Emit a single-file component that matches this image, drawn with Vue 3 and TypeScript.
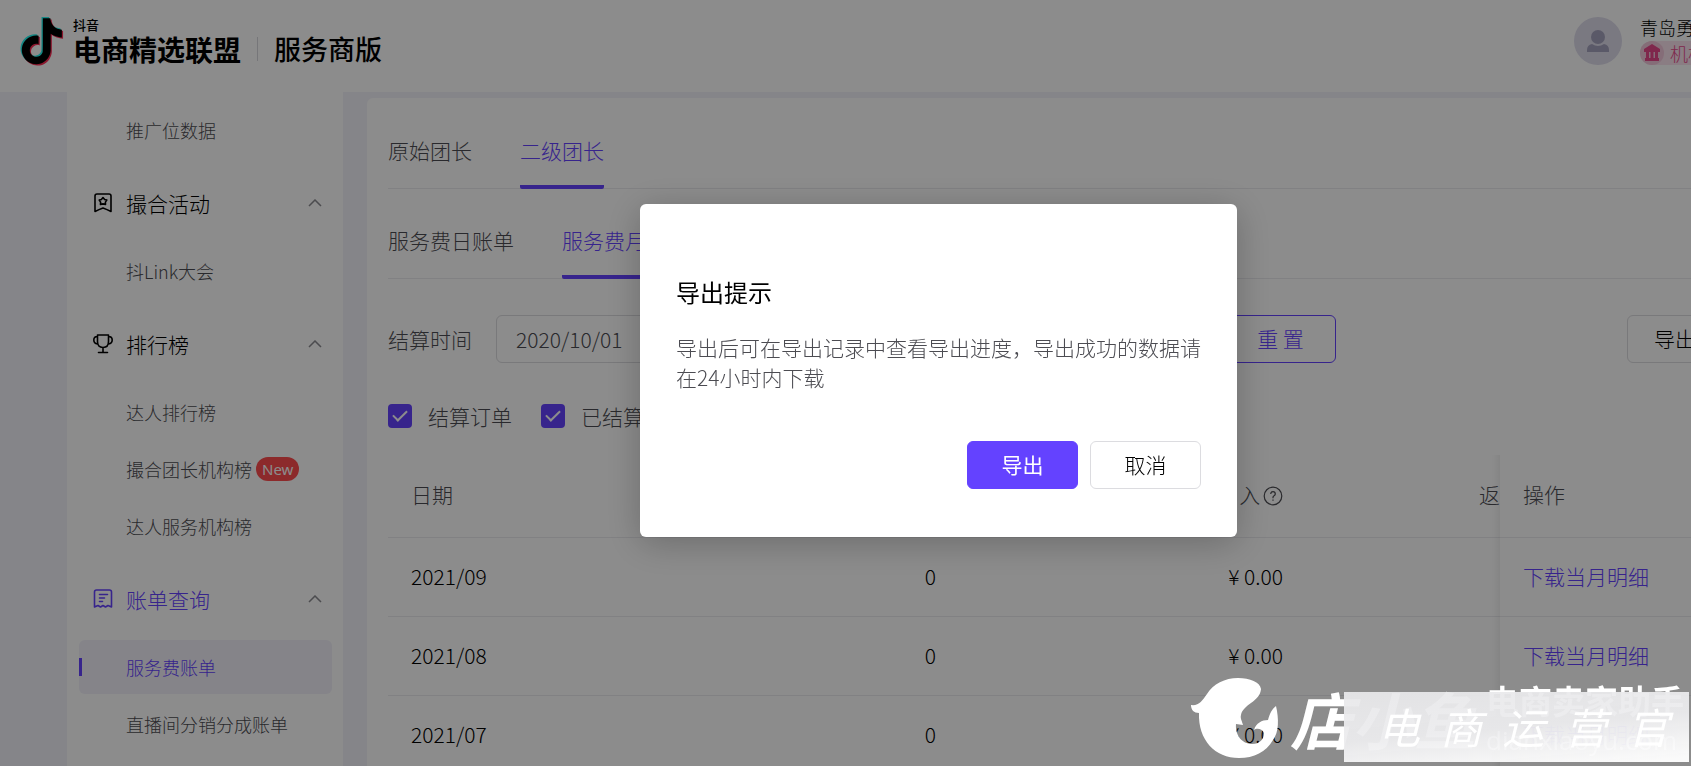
<script setup lang="ts">
import { ref } from 'vue'

interface NavGroup {
  title: string
  icon: 'badge' | 'trophy' | 'bill'
  active?: boolean
  items: { label: string; isNew?: boolean; active?: boolean }[]
}

const groups: NavGroup[] = [
  { title: '撮合活动', icon: 'badge', items: [{ label: '抖Link大会' }] },
  {
    title: '排行榜',
    icon: 'trophy',
    items: [{ label: '达人排行榜' }, { label: '撮合团长机构榜', isNew: true }, { label: '达人服务机构榜' }],
  },
  {
    title: '账单查询',
    icon: 'bill',
    active: true,
    items: [{ label: '服务费账单', active: true }, { label: '直播间分销分成账单' }],
  },
]

const rows = ['2021/09', '2021/08', '2021/07']
const startDate = ref('2020/10/01')
const settleOrder = ref(true)
const settled = ref(true)

const notePath =
  'M12.525.02c1.31-.02 2.61-.01 3.91-.02.08 1.53.63 3.09 1.75 4.17 1.12 1.11 2.7 1.62 4.24 1.79v4.03c-1.44-.05-2.89-.35-4.2-.97-.57-.26-1.1-.59-1.62-.93-.01 2.92.01 5.84-.02 8.75-.08 1.4-.54 2.79-1.35 3.94-1.31 1.92-3.58 3.17-5.91 3.21-1.43.08-2.86-.31-4.08-1.03-2.02-1.19-3.44-3.37-3.65-5.71-.02-.5-.03-1-.01-1.49.18-1.9 1.12-3.72 2.58-4.96 1.66-1.44 3.98-2.13 6.15-1.72.02 1.48-.04 2.96-.04 4.44-.99-.32-2.15-.23-3.02.37-.63.41-1.11 1.04-1.36 1.75-.21.51-.15 1.07-.14 1.61.24 1.64 1.82 3.02 3.5 2.87 1.12-.01 2.19-.66 2.77-1.61.19-.33.4-.67.41-1.06.1-1.79.06-3.57.07-5.36.01-4.03-.01-8.05.02-12.07z'
</script>

<template>
  <div class="page">
    <header class="header">
      <div class="brand">
        <svg class="note" viewBox="0 0 44 50" aria-hidden="true">
          <path :d="notePath" fill="#25f4ee" transform="translate(-2.500 0) scale(1.920)" />
          <path :d="notePath" fill="#fe2c55" transform="translate(0 2.500) scale(1.920)" />
          <path :d="notePath" fill="#000" transform="translate(-1.200 1.200) scale(1.920)" />
        </svg>
        <div class="brand-text">
          <span class="brand-top">抖音</span>
          <div class="brand-main">
            <strong>电商精选联盟</strong>
            <i class="brand-line"></i>
            <span class="brand-sub">服务商版</span>
          </div>
        </div>
      </div>
      <div class="user">
        <svg class="avatar" viewBox="0 0 48 48" aria-hidden="true">
          <circle cx="24" cy="24" r="24" fill="#dedcec" />
          <circle cx="24" cy="20" r="7" fill="#a5a3bd" />
          <path d="M13 35v-2q0-5 5-6 6 4 12 0 5 1 5 6v2z" fill="#a5a3bd" />
        </svg>
        <div class="user-info">
          <span class="user-name">青岛勇</span>
          <span class="tag">
            <svg viewBox="0 0 24 24" aria-hidden="true">
              <circle cx="12" cy="12" r="12" fill="#f3c6da" />
              <path fill="#e8478b" d="M12 3l8 5v3H4V8zM6 11h3v6H6zm4.500 0h3v6h-3zm4.500 0h3v6h-3zM5 17h14v3H5z" />
            </svg>
            机构
          </span>
        </div>
      </div>
    </header>

    <div class="body">
      <nav class="sidebar">
        <a class="item" href="#">推广位数据</a>
        <template v-for="g in groups" :key="g.title">
          <button class="group" :class="{ active: g.active }" type="button" aria-expanded="true">
            <svg class="g-icon" viewBox="0 0 20 20" aria-hidden="true">
              <g fill="none" stroke="currentColor" stroke-width="1.600" stroke-linejoin="round" stroke-linecap="round">
                <template v-if="g.icon === 'badge'">
                  <path d="M2 3q0-2 2-2h12q2 0 2 2v15.500q-4-2-8-3.500-4 1.500-8 3.500z" />
                  <path d="M10 4.500l1.600 1.900 2.200.7-1.400 2 .1 2.400-2.500-.6-2.500.6.1-2.400-1.400-2 2.200-.7z" />
                </template>
                <template v-else-if="g.icon === 'trophy'">
                  <path d="M4.500 1h11v6.500q0 6-5.500 6T4.500 7.500zM4.500 2.500Q.8 2.500.8 6t3.700 4M15.500 2.500q3.700 0 3.700 3.500t-3.700 4M10 13.500V18M5.500 18.500h9" />
                </template>
                <template v-else>
                  <path d="M1.500 18V3q0-2 2-2h13q2 0 2 2v15l-3.500-1.500L12.500 18 10 16.500 7.500 18 5 16.500zM6.500 5.500h8M6.500 9h5M6.500 12.500h3" />
                </template>
              </g>
            </svg>
            <span>{{ g.title }}</span>
            <svg class="chev" viewBox="0 0 14 8" aria-hidden="true"><path d="M1 7l6-6 6 6" fill="none" stroke="#8a8a90" stroke-width="1.500" /></svg>
          </button>
          <a v-for="i in g.items" :key="i.label" class="item" :class="{ active: i.active }" href="#">
            {{ i.label }}<span v-if="i.isNew" class="new">New</span>
          </a>
        </template>
      </nav>

      <main class="card">
        <div class="tabs">
          <button type="button">原始团长</button>
          <button type="button" class="on">二级团长</button>
        </div>
        <div class="tabs">
          <button type="button">服务费日账单</button>
          <button type="button" class="on">服务费月账单</button>
        </div>

        <div class="filters">
          <label for="start">结算时间</label>
          <input id="start" v-model="startDate" class="date" type="text" />
          <button class="btn reset" type="button">重 置</button>
          <button class="btn export" type="button">导出</button>
        </div>

        <div class="checks">
          <label><input v-model="settleOrder" type="checkbox" />结算订单</label>
          <label><input v-model="settled" type="checkbox" />已结算</label>
        </div>

        <table>
          <colgroup><col class="c-date" /><col class="c-num" /><col class="c-num" /><col /><col class="c-op" /></colgroup>
          <thead>
            <tr>
              <th>日期</th>
              <th class="num">订单数</th>
              <th class="num">
                入
                <svg class="help" viewBox="0 0 20 20" aria-hidden="true">
                  <g fill="none" stroke="currentColor" stroke-width="1.200"><circle cx="10" cy="10" r="8.800" /><path d="M7.700 8q0-2.300 2.300-2.300T12.300 8q0 1-1.200 1.700T10 11.500v.8M10 13.500v1.300" /></g>
                </svg>
              </th>
              <th class="back">返</th>
              <th class="op">操作</th>
            </tr>
          </thead>
          <tbody>
            <tr v-for="r in rows" :key="r">
              <td>{{ r }}</td>
              <td class="num">0</td>
              <td class="num">¥ 0.00</td>
              <td></td>
              <td class="op"><a href="#">下载当月明细</a></td>
            </tr>
          </tbody>
        </table>
      </main>
    </div>

    <div class="mask">
      <section class="modal" role="dialog" aria-modal="true" aria-labelledby="dlg-title">
        <h2 id="dlg-title">导出提示</h2>
        <p>导出后可在导出记录中查看导出进度，导出成功的数据请在24小时内下载</p>
        <div class="actions">
          <button class="btn primary" type="button">导出</button>
          <button class="btn" type="button">取消</button>
        </div>
      </section>
    </div>

    <div class="watermark">
      <svg class="fish" viewBox="0 0 88 80" aria-hidden="true">
        <path fill="#fff" d="M0 27C8 28 11 23 16 16 22 6 34 0 47 0 59 0 69 4 70 11 69 24 52 26 50 37c-1 3 1 6 2 10l-7-1c-1 11 6 20 16 20 8 0 12-5 12-11-2-5-8-5-10-3 2-7 8-10 14-10 2-7 4-11 8-14 3 13 3 26-3 34C75 74 63 80 48 80 24 80 7 62 8 35 3 35 0 32 0 27zM77 42l1 3" />
      </svg>
      <strong class="wm-name">店小鱼</strong>
      <div class="wm-side">
        <b>电商卖家助手</b>
        <span>dianxiaoyu.com</span>
      </div>
      <div class="wm-cover">
        <span v-for="c in '电商运营官'" :key="c">{{ c }}</span>
      </div>
    </div>
  </div>
</template>

<style>
body {
  margin: 0;
  background: #f3f2f9;
}
</style>

<style scoped>
.page {
  position: relative;
  height: 100vh;
  display: flex;
  flex-direction: column;
  overflow: hidden;
  background: #f3f2f9;
  color: #4c4c52;
  font: 300 21px/30px 'Noto Sans CJK SC', sans-serif;
}
button,
input {
  font: inherit;
  color: inherit;
}
button {
  padding: 0;
  border: 0;
  background: none;
  white-space: nowrap;
}
a {
  color: inherit;
  text-decoration: none;
}
.header {
  flex: none;
  height: 92px;
  display: flex;
  justify-content: space-between;
  box-sizing: border-box;
  padding: 17px 0 0 20px;
  background: #fff;
}
.brand {
  display: flex;
  gap: 9px;
  color: #000;
}
.note {
  width: 44px;
  height: 50px;
}
.brand-text {
  display: flex;
  flex-direction: column;
}
.brand-top {
  font-size: 13px;
  font-weight: 500;
  line-height: 16px;
}
.brand-main {
  display: flex;
  align-items: center;
  font-size: 28px;
  line-height: 32px;
}
.brand-main strong {
  font-weight: 700;
}
.brand-line {
  width: 1px;
  height: 24px;
  margin: 0 16px;
  background: #d8d8dc;
}
.brand-sub {
  font-size: 27px;
  font-weight: 500;
}
.user {
  flex: none;
  width: 117px;
  display: flex;
  gap: 18px;
}
.avatar {
  flex: none;
  width: 48px;
  height: 48px;
}
.user-info {
  flex: none;
  display: flex;
  flex-direction: column;
  gap: 4px;
}
.user-name {
  color: #000;
  font-size: 18px;
  line-height: 20px;
}
.tag {
  display: flex;
  align-items: center;
  gap: 6px;
  padding-right: 12px;
  border-radius: 12px;
  background: #fbe3ee;
  color: #e8478b;
  font-size: 18px;
  line-height: 24px;
}
.tag svg {
  width: 24px;
  height: 24px;
}
.body {
  flex: 1;
  min-height: 0;
  display: flex;
  gap: 24px;
  padding-left: 67px;
}
.sidebar {
  flex: none;
  width: 276px;
  box-sizing: border-box;
  display: flex;
  flex-direction: column;
  padding: 11px 11px 0 12px;
  background: #fff;
}
.item {
  flex: none;
  display: flex;
  align-items: center;
  height: 54px;
  margin-bottom: 3px;
  padding-left: 47px;
  border-radius: 6px;
  font-size: 18px;
  white-space: nowrap;
}
.item.active {
  background: linear-gradient(#6442ff, #6442ff) 0 50% / 3px 18px no-repeat #f2f1fa;
  color: #6442ff;
}
.group {
  flex: none;
  display: flex;
  align-items: center;
  height: 54px;
  margin: 16px 10px 14px 14px;
  color: #000;
}
.group.active {
  color: #6442ff;
}
.g-icon {
  width: 20px;
  height: 20px;
  margin-right: 13px;
}
.chev {
  width: 14px;
  height: 8px;
  margin-left: auto;
}
.new {
  margin-left: 4px;
  padding: 0 6px;
  border-radius: 12px;
  background: #ff4d4f;
  color: #fff;
  font: 400 15px/24px 'Noto Sans', sans-serif;
}
.card {
  flex: 1;
  min-width: 0;
  margin-top: 6px;
  padding: 17px 0 0 21px;
  border-radius: 6px 0 0 0;
  background: #fff;
}
.tabs {
  display: flex;
  gap: 48px;
  height: 74px;
  box-sizing: border-box;
  margin-bottom: 16px;
  box-shadow: inset 0 -1px #ebebef;
}
.tabs button {
  padding-bottom: 4px;
}
.tabs .on {
  color: #6442ff;
  background: linear-gradient(#6442ff, #6442ff) 0 100% / 100% 4px no-repeat;
  border-radius: 2px;
}
.filters {
  display: flex;
  align-items: center;
  margin-top: 36px;
}
.date {
  width: 340px;
  height: 48px;
  box-sizing: border-box;
  margin-left: 24px;
  padding: 0 19px;
  border: 1px solid #dcdce0;
  border-radius: 6px;
  background: #fff;
}
.btn {
  width: 111px;
  height: 48px;
  padding-bottom: 2px;
  border: 1px solid #dcdce0;
  border-radius: 6px;
  background: #fff;
  color: #000;
}
.reset {
  margin-left: 389px;
  border-color: #6442ff;
  color: #6442ff;
}
.export {
  width: 96px;
  margin: 0 -32px 0 auto;
}
.checks {
  display: flex;
  gap: 29px;
  margin: 38px 0 24px;
}
.checks label {
  display: flex;
  align-items: center;
  gap: 16px;
}
.checks input {
  appearance: none;
  width: 24px;
  height: 24px;
  margin: 0;
  border-radius: 4px;
  background: #6442ff;
  display: grid;
  place-items: center;
}
.checks input::after {
  content: '';
  width: 12px;
  height: 6px;
  margin-bottom: 4px;
  border: solid #fff;
  border-width: 0 0 2px 2px;
  transform: rotate(-45deg);
}
table {
  width: 100%;
  table-layout: fixed;
  border-collapse: separate;
  border-spacing: 0;
}
.c-date {
  width: 225px;
}
.c-num {
  width: 347px;
}
.c-op {
  width: 191px;
}
th,
td {
  height: 79px;
  box-sizing: border-box;
  padding: 0 24px 2px 23px;
  border-bottom: 1px solid #ebebef;
  font-weight: 300;
  text-align: left;
  white-space: nowrap;
}
th {
  height: 83px;
  padding-bottom: 4px;
}
td {
  color: #000;
}
.num {
  text-align: right;
}
.back {
  padding-right: 0;
  text-align: right;
}
.help {
  width: 20px;
  height: 20px;
  margin-left: -2px;
  vertical-align: -3px;
}
.op {
  position: relative;
  background: #fff;
}
.op::before {
  content: '';
  position: absolute;
  top: 0;
  bottom: -1px;
  left: -8px;
  width: 8px;
  background: linear-gradient(90deg, transparent, rgba(0, 0, 0, 0.05));
}
.op a {
  color: #6442ff;
}
.mask {
  position: fixed;
  inset: 0;
  display: flex;
  align-items: flex-start;
  justify-content: center;
  padding: 204px 0 0 186px;
  background: rgba(0, 0, 0, 0.45);
}
.modal {
  width: 597px;
  box-sizing: border-box;
  padding: 70px 36px 48px;
  border-radius: 6px;
  background: #fff;
  box-shadow: 0 6px 36px rgba(0, 0, 0, 0.24);
}
.modal h2 {
  margin: 0;
  color: #000;
  font-size: 24px;
  font-weight: 400;
  line-height: 36px;
}
.modal p {
  margin: 22px 0 49px;
}
.actions {
  display: flex;
  justify-content: flex-end;
  gap: 12px;
}
.primary {
  border-color: #6442ff;
  background: #6442ff;
  color: #fff;
  font-weight: 400;
}
.watermark {
  position: fixed;
  right: 2px;
  bottom: 4px;
  width: 498px;
  height: 84px;
  display: flex;
  color: #fff;
}
.fish {
  flex: none;
  width: 88px;
  height: 80px;
}
.wm-name {
  flex: none;
  margin-left: 11px;
  font-size: 62px;
  font-style: italic;
  font-weight: 700;
  line-height: 80px;
}
.wm-side {
  flex: none;
  display: flex;
  flex-direction: column;
  margin-left: 10px;
}
.wm-side b {
  font-size: 33px;
  font-weight: 700;
  line-height: 44px;
}
.wm-side span {
  font: 400 26px/36px 'Open Sans', sans-serif;
}
.wm-cover {
  position: absolute;
  right: 0;
  bottom: 0;
  width: 345px;
  height: 70px;
  box-sizing: border-box;
  display: flex;
  justify-content: space-between;
  padding: 0 20px 0 34px;
  background: linear-gradient(175deg, rgba(232, 232, 234, 0.94), rgba(236, 236, 238, 0.95) 50%, rgba(254, 254, 254, 0.97) 95%);
  font-size: 42px;
  font-style: italic;
  font-weight: 400;
  line-height: 68px;
}
</style>
